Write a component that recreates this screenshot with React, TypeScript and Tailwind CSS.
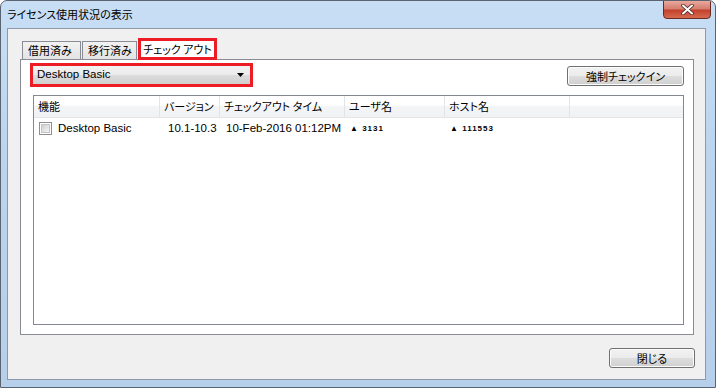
import React from "react";

const jp = "font-['Noto_Sans_CJK_JP','Liberation_Sans',sans-serif] [font-feature-settings:'palt']";
const lat = "font-['Liberation_Sans','Noto_Sans_CJK_JP',sans-serif]";

const btn =
  "flex items-center justify-center rounded-[3px] border border-[#707070] bg-[linear-gradient(to_bottom,#f2f2f2_0%,#ebebeb_50%,#dddddd_51%,#cfcfcf_100%)] shadow-[inset_0_0_0_1px_#fcfcfc] text-black";

const columns = [
  { label: "機能", w: "w-[126px]" },
  { label: "バージョン", w: "w-[60px]" },
  { label: "チェックアウト タイム", w: "w-[125px]" },
  { label: "ユーザ名", w: "w-[100px]" },
  { label: "ホスト名", w: "w-[125px]" },
];

function Tab({ label, w, selected }: { label: string; w: string; selected?: boolean }) {
  if (selected) {
    return (
      <div className={`${w} h-[22px] mb-[-1px] relative z-10 bg-white border-[3px] border-[#ed1c24] flex items-center justify-center text-[11px] ${jp}`}>
        {label}
      </div>
    );
  }
  return (
    <div className={`${w} h-[19px] mb-[-1px] border border-[#898c95] bg-[linear-gradient(to_bottom,#f2f2f2,#e3e3e3)] flex items-center pl-[5px] text-[11px] ${jp}`}>
      {label}
    </div>
  );
}

export default function App() {
  return (
    <div className="w-[716px] h-[388px] relative overflow-hidden rounded-t-[7px] border border-[#5a6370] bg-[linear-gradient(to_bottom,#c7def5,#bcd4ee_40%,#b6cfea)]">
      {/* title bar */}
      <div className={`h-[27px] flex items-center pl-[6px] text-[11px] text-black ${jp}`}>
        ライセンス使用状況の表示
      </div>
      <div className="absolute top-[-1px] right-[4px] w-[48px] h-[19px] rounded-b-[4px] border border-[#6b2a22] bg-[linear-gradient(to_bottom,#e9a99e,#d47f6f_45%,#c4412d_55%,#d56a4f)] flex items-center justify-center">
        <svg width="13" height="11" viewBox="0 0 13 11">
          <path d="M2 1.5 L11 9.5 M11 1.5 L2 9.5" stroke="#4a2420" strokeWidth="3.6" strokeLinecap="round" />
          <path d="M2 1.5 L11 9.5 M11 1.5 L2 9.5" stroke="#ffffff" strokeWidth="2" strokeLinecap="round" />
        </svg>
      </div>

      {/* client area */}
      <div className="ml-[6px] w-[699px] h-[352px] border border-[#8d99a8] bg-[#f0f0f0] flex flex-col">
        <div className="pl-[12px] pt-[9px]">
          <div className="flex items-end gap-[1px] pl-[2px]">
            <Tab label="借用済み" w="w-[59px]" />
            <Tab label="移行済み" w="w-[55px]" />
            <Tab label="チェック アウト" w="w-[79px]" selected />
          </div>
          <div className="w-[674px] h-[276px] border border-[#898c95] bg-white flex flex-col">
            {/* toolbar row */}
            <div className="flex items-start pt-[3px] pl-[9px]">
              <div className="w-[223px] h-[24px] border-[3px] border-[#ed1c24] bg-[linear-gradient(to_bottom,#f2f2f2_0%,#ebebeb_50%,#dddddd_51%,#cfcfcf_100%)] flex items-center pl-[4px] pr-[4px]">
                <span className={`flex-1 text-[11.5px] ${lat}`}>Desktop Basic</span>
                <svg width="7" height="4" viewBox="0 0 7 4" className="mr-[2px]">
                  <path d="M0 0 H7 L3.5 4 Z" fill="#000" />
                </svg>
              </div>
              <div className={`${btn} ml-auto mr-[9px] mt-[3px] w-[117px] h-[20px] text-[11px] ${jp}`}>
                強制チェックイン
              </div>
            </div>

            {/* list */}
            <div className="ml-[12px] mt-[8px] w-[651px] h-[230px] border border-[#828790] bg-white flex flex-col">
              <div className="h-[22px] flex bg-[linear-gradient(to_bottom,#ffffff_0%,#ffffff_45%,#f4f5f7_46%,#f1f2f4_100%)] border-b border-[#e5e5e5]">
                {columns.map((c) => (
                  <div key={c.label} className={`${c.w} shrink-0 h-full flex items-center pl-[4px] border-r border-[#e3e4e6] text-[11px] ${jp}`}>
                    {c.label}
                  </div>
                ))}
                <div className="flex-1" />
              </div>
              <div className={`h-[19px] mt-[1px] flex items-center text-[11.5px] ${lat}`}>
                <div className="w-[126px] shrink-0 flex items-center pl-[5px]">
                  <div className="w-[13px] h-[13px] border border-[#8f8f8f] bg-white p-[1px]">
                    <div className="w-full h-full border border-[#c4c4c4] bg-[linear-gradient(135deg,#cfcfcf,#f4f4f4)]" />
                  </div>
                  <span className="ml-[6px]">Desktop Basic</span>
                </div>
                <div className="w-[60px] shrink-0 pl-[8px]">10.1-10.3</div>
                <div className="w-[125px] shrink-0 pl-[6px] whitespace-nowrap">10-Feb-2016 01:12PM</div>
                <div className="w-[100px] shrink-0 pl-[5px] text-[8px] font-bold tracking-[1px]">▲ 3131</div>
                <div className="w-[125px] shrink-0 pl-[5px] text-[8px] font-bold tracking-[1px]">▲ 111553</div>
              </div>
            </div>
          </div>
        </div>

        <div className="flex justify-end pr-[10px] mt-[13px]">
          <div className={`${btn} w-[86px] h-[20px] text-[11px] ${jp}`}>閉じる</div>
        </div>
      </div>
    </div>
  );
}
